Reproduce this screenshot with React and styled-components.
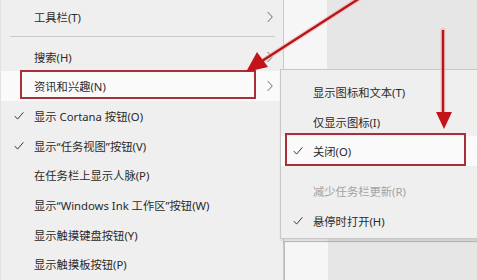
import React from 'react';
import styled, { createGlobalStyle, css } from 'styled-components';

const GlobalStyle = createGlobalStyle`
  html, body {
    margin: 0;
    padding: 0;
    width: 477px;
    height: 280px;
    overflow: hidden;
    background: #e7e7e7;
  }
  * {
    box-sizing: border-box;
  }
`;

const Screen = styled.div`
  position: relative;
  width: 477px;
  height: 280px;
  display: flex;
  font-family: "Noto Sans", "Noto Sans CJK SC", sans-serif;
  font-size: 11.3px;
  color: #2a2a2a;
  overflow: hidden;
`;

const Menu = styled.div`
  width: 284px;
  height: 100%;
  flex-shrink: 0;
  background: #efefef;
  border-left: 1px solid #e2e2e2;
  border-right: 1px solid #c9c9c9;
  padding-top: 2px;
  display: flex;
  flex-direction: column;
`;

const Backdrop = styled.div`
  flex: 1;
  display: flex;
  flex-direction: column;
`;

const Pane = styled.div`
  display: flex;
  flex: ${(p) => (p.grow ? 1 : 'none')};
  height: ${(p) => (p.h ? `${p.h}px` : 'auto')};
  ${(p) =>
    p.framed &&
    css`
      border-top: 1px solid #bdbdbd;
      border-left: 1px solid #bdbdbd;
    `}
`;

const Strip = styled.div`
  width: 43px;
  background: #f6f6f6;
`;

const Fill = styled.div`
  flex: 1;
  background: #e6e6e6;
`;

const Row = styled.div`
  position: relative;
  height: 29.7px;
  flex-shrink: 0;
  display: flex;
  align-items: center;
  padding-left: ${(p) => p.indent}px;
  color: ${(p) => (p.disabled ? '#a3a3a3' : '#2a2a2a')};
  background: ${(p) => (p.hot ? '#fafafa' : 'transparent')};
  white-space: nowrap;
  ${(p) =>
    p.mark &&
    css`
      &::after {
        content: '';
        position: absolute;
        left: ${p.mark.l}px;
        right: ${p.mark.r}px;
        top: ${p.mark.t}px;
        bottom: ${p.mark.b}px;
        border: 2px solid #a8303a;
      }
    `}
`;

const Check = styled.span`
  position: absolute;
  left: ${(p) => p.x}px;
  top: 50%;
  transform: translateY(-50%);
  display: flex;
  color: #3a3a3a;
`;

const Chevron = styled.span`
  position: absolute;
  right: 10px;
  top: 50%;
  transform: translateY(-50%);
  display: flex;
`;

const Divider = styled.div`
  height: 10px;
  flex-shrink: 0;
  display: flex;
  align-items: center;
  padding: 0 ${(p) => p.pr}px 0 ${(p) => p.pl}px;

  &::before {
    content: '';
    flex: 1;
    height: 1px;
    background: ${(p) => (p.hidden ? 'transparent' : '#cacaca')};
  }
`;

const SubMenu = styled.div`
  position: absolute;
  left: 280px;
  top: 69px;
  width: 200px;
  height: 170px;
  background: #efefef;
  border: 1px solid #c8c8c8;
  box-shadow: 1px 2px 3px rgba(0, 0, 0, 0.12);
  padding-top: 7px;
  display: flex;
  flex-direction: column;
`;

const Arrows = styled.svg`
  position: absolute;
  left: 0;
  top: 0;
  pointer-events: none;
`;

const Tick = () => (
  <svg width="10" height="9" viewBox="0 0 10 9">
    <path d="M0.8 4.6 L3.6 7.6 L9.4 0.8" fill="none" stroke="currentColor" strokeWidth="1" />
  </svg>
);

const Arrow = () => (
  <svg width="6" height="11" viewBox="0 0 6 11">
    <path d="M0.7 0.6 L5.3 5.5 L0.7 10.4" fill="none" stroke="#6a6a6a" strokeWidth="1" />
  </svg>
);

const leftItems = [
  { label: '工具栏(T)', sub: true },
  { divider: true },
  { label: '搜索(H)', sub: true },
  { label: '资讯和兴趣(N)', sub: true, hot: true, mark: { l: 19, r: 27, t: -1, b: 2 } },
  { label: '显示 Cortana 按钮(O)', checked: true },
  { label: '显示“任务视图”按钮(V)', checked: true },
  { label: '在任务栏上显示人脉(P)' },
  { label: '显示“Windows Ink 工作区”按钮(W)' },
  { label: '显示触摸键盘按钮(Y)' },
  { label: '显示触摸板按钮(P)' },
];

const subItems = [
  { label: '显示图标和文本(T)' },
  { label: '仅显示图标(I)' },
  { label: '关闭(O)', checked: true, hot: true, mark: { l: 4, r: 13, t: -3, b: 0 } },
  { divider: true, hidden: true },
  { label: '减少任务栏更新(R)', disabled: true },
  { label: '悬停时打开(H)', checked: true },
];

const renderItems = (items, indent, checkX, dl, dr) =>
  items.map((it, i) =>
    it.divider ? (
      <Divider key={i} pl={dl} pr={dr} hidden={it.hidden} />
    ) : (
      <Row key={i} indent={indent} hot={it.hot} mark={it.mark} disabled={it.disabled}>
        {it.checked && (
          <Check x={checkX}>
            <Tick />
          </Check>
        )}
        {it.label}
        {it.sub && (
          <Chevron>
            <Arrow />
          </Chevron>
        )}
      </Row>
    )
  );

const App = () => (
  <>
    <GlobalStyle />
    <Screen>
      <Menu>{renderItems(leftItems, 33, 13, 9, 8)}</Menu>
      <Backdrop>
        <Pane h={241}>
          <Strip />
          <Fill />
        </Pane>
        <Pane grow framed>
          <Strip />
          <Fill />
        </Pane>
      </Backdrop>
      <SubMenu>{renderItems(subItems, 32, 12, 0, 0)}</SubMenu>
      <Arrows width="477" height="280" viewBox="0 0 477 280">
        <g stroke="#f4b3b3" strokeWidth="5" strokeLinecap="round" opacity="0.6">
          <line x1="360" y1="-2" x2="262" y2="61" />
          <line x1="443" y1="30" x2="443" y2="114" />
        </g>
        <g stroke="#b8141c" strokeWidth="2.4">
          <line x1="360" y1="-2" x2="262" y2="61" />
          <line x1="443" y1="30" x2="443" y2="114" />
        </g>
        <polygon points="246,72 257,52 268,67" fill="#c3141c" />
        <polygon points="436,112 452,112 444,129" fill="#c3141c" />
      </Arrows>
    </Screen>
  </>
);

export default App;
